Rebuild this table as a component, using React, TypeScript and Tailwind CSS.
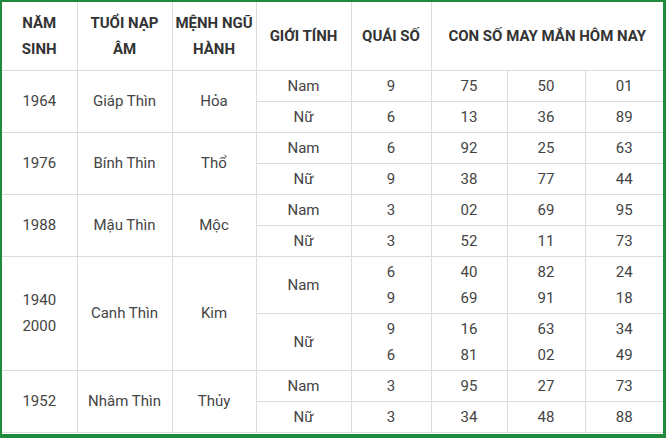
type Row = { gt: string; qs: string[]; nums: string[][] };
type Group = { nam: string[]; tuoi: string; menh: string; tall?: boolean; rows: Row[] };

const groups: Group[] = [
  {
    nam: ["1964"], tuoi: "Giáp Thìn", menh: "Hỏa",
    rows: [
      { gt: "Nam", qs: ["9"], nums: [["75"], ["50"], ["01"]] },
      { gt: "Nữ", qs: ["6"], nums: [["13"], ["36"], ["89"]] },
    ],
  },
  {
    nam: ["1976"], tuoi: "Bính Thìn", menh: "Thổ",
    rows: [
      { gt: "Nam", qs: ["6"], nums: [["92"], ["25"], ["63"]] },
      { gt: "Nữ", qs: ["9"], nums: [["38"], ["77"], ["44"]] },
    ],
  },
  {
    nam: ["1988"], tuoi: "Mậu Thìn", menh: "Mộc",
    rows: [
      { gt: "Nam", qs: ["3"], nums: [["02"], ["69"], ["95"]] },
      { gt: "Nữ", qs: ["3"], nums: [["52"], ["11"], ["73"]] },
    ],
  },
  {
    nam: ["1940", "2000"], tuoi: "Canh Thìn", menh: "Kim", tall: true,
    rows: [
      { gt: "Nam", qs: ["6", "9"], nums: [["40", "69"], ["82", "91"], ["24", "18"]] },
      { gt: "Nữ", qs: ["9", "6"], nums: [["16", "81"], ["63", "02"], ["34", "49"]] },
    ],
  },
  {
    nam: ["1952"], tuoi: "Nhâm Thìn", menh: "Thủy",
    rows: [
      { gt: "Nam", qs: ["3"], nums: [["95"], ["27"], ["73"]] },
      { gt: "Nữ", qs: ["3"], nums: [["34"], ["48"], ["88"]] },
    ],
  },
];

const th = "border border-[#dcdcdc] text-center align-middle font-bold text-[15px] leading-[26px] text-[#333]";
const td = "border border-[#dcdcdc] text-center align-middle text-[15px] leading-[26px] text-[#444]";

function Lines({ items }: { items: string[] }) {
  return (
    <>
      {items.map((t, i) => (
        <div key={i}>{t}</div>
      ))}
    </>
  );
}

export default function App() {
  return (
    <div
      className="w-[666px] h-[438px] bg-white border-l-2 border-t-2 border-r-[3px] border-b-4 border-[#1f8a3c] overflow-hidden"
      style={{ fontFamily: "Roboto, 'Liberation Sans', sans-serif" }}
    >
      <div className="border-b border-[#dcdcdc]">
        <table className="table-fixed border-collapse w-[661px] border-hidden">
          <colgroup>
            <col className="w-[75px]" />
            <col className="w-[95px]" />
            <col className="w-[84px]" />
            <col className="w-[95px]" />
            <col className="w-[80px]" />
            <col className="w-[76px]" />
            <col className="w-[78px]" />
            <col className="w-[78px]" />
          </colgroup>
          <thead>
            <tr className="h-[68px]">
              <th className={th}>NĂM<br />SINH</th>
              <th className={th}>TUỔI NẠP<br />ÂM</th>
              <th className={th}>MỆNH NGŨ<br />HÀNH</th>
              <th className={th}>GIỚI TÍNH</th>
              <th className={th}>QUÁI SỐ</th>
              <th className={th} colSpan={3}>CON SỐ MAY MẮN HÔM NAY</th>
            </tr>
          </thead>
          <tbody>
            {groups.map((g) =>
              g.rows.map((r, i) => (
                <tr key={g.tuoi + i} className={g.tall ? "h-[57px]" : "h-[31px]"}>
                  {i === 0 && (
                    <>
                      <td className={td} rowSpan={2}><Lines items={g.nam} /></td>
                      <td className={td} rowSpan={2}>{g.tuoi}</td>
                      <td className={td} rowSpan={2}>{g.menh}</td>
                    </>
                  )}
                  <td className={td}>{r.gt}</td>
                  <td className={td}><Lines items={r.qs} /></td>
                  {r.nums.map((n, j) => (
                    <td key={j} className={td}><Lines items={n} /></td>
                  ))}
                </tr>
              ))
            )}
          </tbody>
        </table>
      </div>
    </div>
  );
}
